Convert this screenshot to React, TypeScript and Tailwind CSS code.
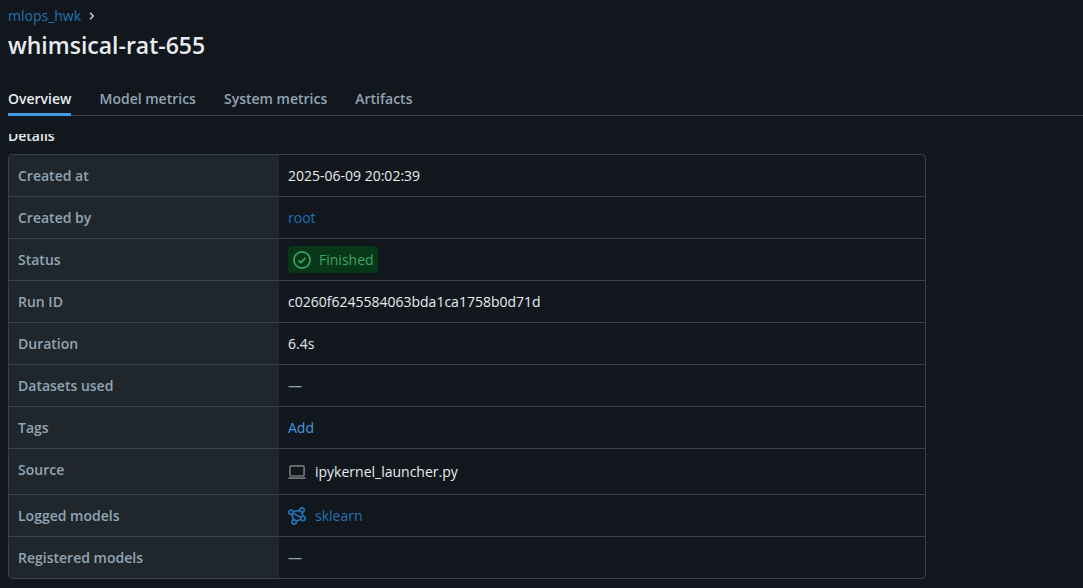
import type { ReactNode } from "react";

const tabs = ["Overview", "Model metrics", "System metrics", "Artifacts"];

function ChevronIcon() {
  return (
    <svg width="8" height="10" viewBox="0 0 8 10" fill="none" stroke="#c3ced6" strokeWidth="1.5" aria-hidden="true">
      <path d="M2 1.8 5.2 5 2 8.2" />
    </svg>
  );
}

function CheckCircleIcon() {
  return (
    <svg width="18" height="18" viewBox="0 0 18 18" fill="none" stroke="#3ba65e" strokeWidth="1.7" aria-hidden="true">
      <circle cx="9" cy="9" r="8.1" />
      <path d="m5.4 9.4 2.3 2.2 4.8-4.8" />
    </svg>
  );
}

function LaptopIcon() {
  return (
    <svg width="18" height="18" viewBox="0 0 18 18" fill="none" aria-hidden="true">
      <rect x="1.9" y="2.8" width="14.2" height="10.2" rx="1.4" stroke="#737373" strokeWidth="1.7" />
      <path d="M0 14.2h18c0 1.1-.7 1.8-1.6 1.8H1.6C.7 16 0 15.3 0 14.2Z" fill="#737373" />
    </svg>
  );
}

function ModelsIcon() {
  return (
    <svg width="18" height="18" viewBox="0 0 18 18" fill="none" stroke="#2272b4" strokeWidth="1.7" aria-hidden="true">
      <circle cx="3" cy="5.2" r="2.2" />
      <circle cx="14" cy="3" r="2.2" />
      <circle cx="15" cy="11.4" r="2.2" />
      <circle cx="6.2" cy="15" r="2.2" />
      <path d="m5.2 4.8 6.6-1.4M14.3 5.2l.4 4M12.9 12.3l-4.6 1.9M3.7 7.3l1.8 5.5M4.9 6.3l8.1 4.1" />
    </svg>
  );
}

const link = "text-[#2272b4] hover:underline";

const dash = <span className="text-[#92a4b3]">—</span>;

const rows: { label: string; value: ReactNode; tall?: boolean }[] = [
  { label: "Created at", value: "2025-06-09 20:02:39" },
  { label: "Created by", value: <a href="#root" className={link}>root</a> },
  {
    label: "Status",
    value: (
      <span className="inline-flex h-[27px] items-center gap-2 rounded bg-[#083618] pr-1 pl-[5px] align-middle text-[#3ba65e]">
        <CheckCircleIcon />
        Finished
      </span>
    ),
  },
  { label: "Run ID", value: "c0260f6245584063bda1ca1758b0d71d" },
  { label: "Duration", value: "6.4s" },
  { label: "Datasets used", value: dash },
  { label: "Tags", value: <button type="button" className="text-[#4299e0]">Add</button> },
  {
    label: "Source",
    tall: true,
    value: (
      <span className="flex items-center gap-[9px]">
        <LaptopIcon />
        ipykernel_launcher.py
      </span>
    ),
  },
  {
    label: "Logged models",
    value: (
      <a href="#sklearn" className="flex items-center gap-[9px] text-[#2272b4]">
        <ModelsIcon />
        sklearn
      </a>
    ),
  },
  { label: "Registered models", value: dash },
];

export default function App() {
  return (
    <div className="min-h-screen bg-[#11171c] pb-[9px] pl-2 font-['Open_Sans','Noto_Sans',sans-serif] text-sm leading-5 text-[#e8ecf0]">
      <header className="pt-[6px]">
        <nav aria-label="Breadcrumb" className="flex items-center gap-[7px]">
          <a href="#experiment" className={link}>mlops_hwk</a>
          <ChevronIcon />
        </nav>
        <h1 className="mt-[3px] text-[23px] leading-8 font-semibold">whimsical-rat-655</h1>
      </header>
      <nav aria-label="Run" className="mt-[23px] flex h-8 gap-7 border-b border-[#37444f]">
        {tabs.map((tab, i) => (
          <a
            key={tab}
            href={"#" + tab}
            aria-current={i === 0 ? "page" : undefined}
            className={
              i === 0
                ? "h-8 border-b-[3px] border-[#4299e0] pt-[5px] font-semibold"
                : "h-8 pt-[5px] font-semibold text-[#92a4b3]"
            }
          >
            {tab}
          </a>
        ))}
      </nav>
      <main className="mt-[18px] pr-2">
        <div className="flex h-3 items-end overflow-hidden">
          <h2 className="shrink-0 leading-5 font-semibold">Details</h2>
        </div>
        <table className="mt-2 w-full max-w-[918px] table-fixed border-separate border-spacing-0 overflow-hidden rounded border border-[#37444f]">
          <tbody>
            {rows.map((row, i) => {
              const line = i < rows.length - 1 ? "border-b border-[#37444f]" : "";
              const height = row.tall ? "h-[46px] pb-1" : i < rows.length - 1 ? "h-[42px]" : "h-[41px]";
              return (
                <tr key={row.label}>
                  <th
                    scope="row"
                    className={`${line} ${height} w-[270px] bg-[#1f272d] px-[9px] text-left font-semibold text-[#92a4b3]`}
                  >
                    {row.label}
                  </th>
                  <td className={`${line} px-[9px]`}>{row.value}</td>
                </tr>
              );
            })}
          </tbody>
        </table>
      </main>
    </div>
  );
}
